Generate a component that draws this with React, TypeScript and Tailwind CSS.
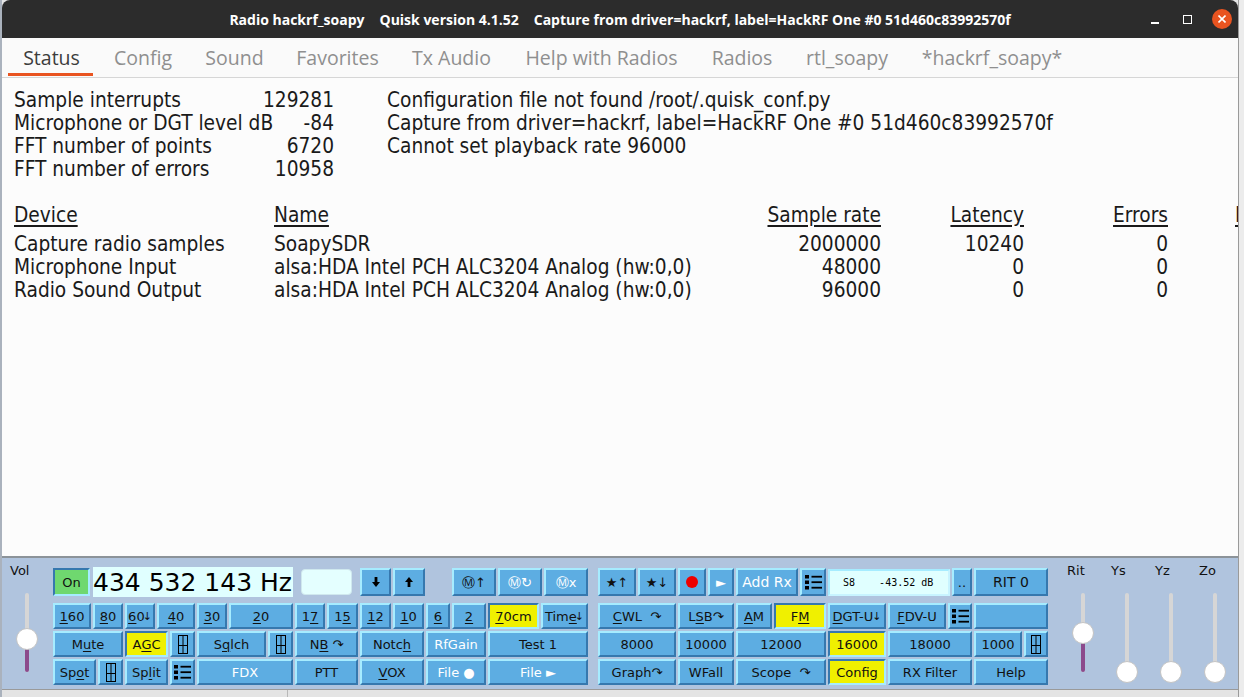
import React from 'react';

const U = ({ children }: { children: React.ReactNode }) => (
  <span className="underline decoration-1 underline-offset-[2px]">{children}</span>
);

type V = 'blue' | 'yellow' | 'green';

function Btn({
  w,
  children,
  v = 'blue',
  white = false,
  tall = false,
  extra = '',
}: {
  w: string;
  children?: React.ReactNode;
  v?: V;
  white?: boolean;
  tall?: boolean;
  extra?: string;
}) {
  const base =
    "flex items-center justify-center border-2 whitespace-nowrap overflow-hidden leading-none text-[13px] font-['DejaVu_Sans',sans-serif] shrink-0";
  const vs =
    v === 'blue'
      ? 'bg-[#5dade2] border-t-[#a6ecff] border-l-[#a6ecff] border-b-[#3678ae] border-r-[#3678ae]'
      : v === 'yellow'
      ? 'bg-[#f0f000] border-t-[#3678ae] border-l-[#3678ae] border-b-[#a6ecff] border-r-[#a6ecff]'
      : 'bg-[#6fd86f] border-t-[#3678ae] border-l-[#3678ae] border-b-[#a6ecff] border-r-[#a6ecff]';
  const h = tall ? 'h-[28px]' : 'h-[26px]';
  return (
    <div className={`${base} ${vs} ${w} ${h} ${white ? 'text-white' : 'text-[#111]'} ${extra}`}>
      {children}
    </div>
  );
}

const SliderIcon = () => (
  <svg width="10" height="19" viewBox="0 0 10 19">
    <rect x="0.5" y="0.5" width="9" height="18" fill="none" stroke="#000" strokeWidth="1" />
    <line x1="5" y1="1" x2="5" y2="18" stroke="#000" strokeWidth="1" />
    <line x1="1" y1="10.5" x2="9" y2="10.5" stroke="#000" strokeWidth="1" />
  </svg>
);

const ListIcon = () => (
  <svg width="17" height="15" viewBox="0 0 17 15">
    <rect x="0" y="0" width="4" height="3.5" fill="#000" />
    <rect x="0" y="5.5" width="4" height="3.5" fill="#000" />
    <rect x="0" y="11" width="4" height="3.5" fill="#000" />
    <rect x="6.5" y="0.8" width="10.5" height="1.8" fill="#000" />
    <rect x="6.5" y="6.3" width="10.5" height="1.8" fill="#000" />
    <rect x="6.5" y="11.8" width="10.5" height="1.8" fill="#000" />
  </svg>
);

const Arrow = ({ up = false }: { up?: boolean }) => (
  <svg width="8" height="10" viewBox="0 0 8 10" className={up ? 'rotate-180' : ''}>
    <rect x="2.6" y="0" width="2.8" height="6" fill="#000" />
    <path d="M0 5 L8 5 L4 10 Z" fill="#000" />
  </svg>
);

function VSlider({ knob, purple }: { knob: number; purple: boolean }) {
  return (
    <div className="relative h-[79px] w-[22px]">
      <div className="absolute left-[9px] top-0 h-full w-[4px] rounded-sm bg-[#d6d6d6]" />
      {purple && (
        <div
          className="absolute left-[9px] w-[4px] rounded-sm bg-[#8c4a8c]"
          style={{ top: knob, height: 79 - knob }}
        />
      )}
      <div
        className="absolute left-0 h-[22px] w-[22px] rounded-full border border-[#c4c4c4] bg-white"
        style={{ top: knob - 11 }}
      />
    </div>
  );
}

const tabs: [string, string][] = [
  ['Status', 'w-[91px]'],
  ['Config', 'w-[92px]'],
  ['Sound', 'w-[91px]'],
  ['Favorites', 'w-[115px]'],
  ['Tx Audio', 'w-[113px]'],
  ['Help with Radios', 'w-[187px]'],
  ['Radios', 'w-[94px]'],
  ['rtl_soapy', 'w-[116px]'],
  ['*hackrf_soapy*', 'w-[174px]'],
];

export default function App() {
  return (
    <div className="flex h-[697px] w-[1244px] overflow-hidden bg-[#e6e6e6]">
      <div className="w-[2px] shrink-0 bg-[#aab2bd]" />
      <div className="flex w-[1237px] shrink-0 flex-col border-r border-[#9a9a9a]">
        {/* Title bar */}
        <div className="relative flex h-[38px] shrink-0 items-center justify-center rounded-t-[8px] bg-[#2c2c2c] font-['Open_Sans',sans-serif] text-[14px] font-bold text-white">
          <div className="flex gap-[15px] pt-[1px]">
            <span>Radio hackrf_soapy</span>
            <span>Quisk version 4.1.52</span>
            <span>Capture from driver=hackrf, label=HackRF One #0 51d460c83992570f</span>
          </div>
          <div className="absolute right-[6px] top-0 flex h-[38px] items-center">
            <div className="flex h-[20px] w-[32px] items-center justify-center">
              <div className="mt-[8px] h-[1.5px] w-[8px] bg-white" />
            </div>
            <div className="flex h-[20px] w-[32px] items-center justify-center">
              <div className="h-[9px] w-[9px] border border-white" />
            </div>
            <div className="ml-[9px] flex h-[20px] w-[20px] items-center justify-center rounded-full bg-[#e95420]">
              <svg width="8" height="8" viewBox="0 0 8 8">
                <path d="M0.5 0.5 L7.5 7.5 M7.5 0.5 L0.5 7.5" stroke="#fff" strokeWidth="1.6" />
              </svg>
            </div>
          </div>
        </div>

        {/* Tabs */}
        <div className="flex h-[40px] shrink-0 border-b border-[#d6d6d6] bg-[#fafafa] pl-[4px] font-['Open_Sans',sans-serif] text-[19.5px]">
          {tabs.map(([t, w], i) => (
            <div key={t} className={`relative flex h-full items-center justify-center ${w}`}>
              <span className={i === 0 ? 'text-[#3c3c3c]' : 'text-[#8f8f8f]'}>{t}</span>
              {i === 0 && (
                <div className="absolute bottom-[1px] left-[2px] right-[4px] h-[3px] bg-[#e95420]" />
              )}
            </div>
          ))}
        </div>

        {/* Body */}
        <div className="h-[478px] shrink-0 overflow-hidden bg-[#fcfcfc] pl-[12px] pt-[11px] font-['DejaVu_Sans',sans-serif] text-[20.7px] leading-[23px] text-[#1a1a1a] [font-stretch:condensed]">
          <div className="flex">
            <div className="w-[320px]">
              <div className="flex justify-between"><span>Sample interrupts</span><span>129281</span></div>
              <div className="flex justify-between"><span>Microphone or DGT level dB</span><span>-84</span></div>
              <div className="flex justify-between"><span>FFT number of points</span><span>6720</span></div>
              <div className="flex justify-between"><span>FFT number of errors</span><span>10958</span></div>
            </div>
            <div className="ml-[53px]">
              <div>Configuration file not found /root/.quisk_conf.py</div>
              <div>Capture from driver=hackrf, label=HackRF One #0 51d460c83992570f</div>
              <div>Cannot set playback rate 96000</div>
            </div>
          </div>
          <div className="mt-[23px] grid w-[1300px] grid-cols-[260px_467px_140px_143px_144px_auto]">
            <span className="underline underline-offset-[3px]">Device</span>
            <span className="underline underline-offset-[3px]">Name</span>
            <span className="text-right underline underline-offset-[3px]">Sample rate</span>
            <span className="text-right underline underline-offset-[3px]">Latency</span>
            <span className="text-right underline underline-offset-[3px]">Errors</span>
            <span className="pl-[67px] underline underline-offset-[3px]">Level</span>
            <div className="col-span-6 h-[6px]" />
            <span>Capture radio samples</span>
            <span>SoapySDR</span>
            <span className="text-right">2000000</span>
            <span className="text-right">10240</span>
            <span className="text-right">0</span>
            <span />
            <span>Microphone Input</span>
            <span>alsa:HDA Intel PCH ALC3204 Analog (hw:0,0)</span>
            <span className="text-right">48000</span>
            <span className="text-right">0</span>
            <span className="text-right">0</span>
            <span />
            <span>Radio Sound Output</span>
            <span>alsa:HDA Intel PCH ALC3204 Analog (hw:0,0)</span>
            <span className="text-right">96000</span>
            <span className="text-right">0</span>
            <span className="text-right">0</span>
            <span />
          </div>
        </div>

        {/* Control panel */}
        <div className="flex h-[134px] shrink-0 border-b border-t-2 border-b-[#9a9a9a] border-t-[#8c9399] bg-[#b0c4de] font-['DejaVu_Sans',sans-serif] text-[13px] text-[#111]">
          {/* Vol */}
          <div className="flex w-[51px] shrink-0 flex-col items-start pl-[8px] pt-[5px]">
            <div className="h-[16px] leading-[16px]">Vol</div>
            <div className="ml-[6px] mt-[14px]">
              <VSlider knob={46} purple />
            </div>
          </div>

          {/* Buttons */}
          <div className="flex w-[995px] shrink-0 flex-col pt-[9px]">
            {/* Row 1 */}
            <div className="flex h-[30px] items-center gap-[2px]">
              <Btn w="w-[37px]" v="green" tall>On</Btn>
              <div className="ml-[1px] flex h-[30px] w-[200px] items-center bg-[#e0ffff] text-[25px] leading-none text-black">
                434 532 143 Hz
              </div>
              <div className="ml-[6px] h-[26px] w-[51px] rounded-[4px] border border-[#cfe8ee] bg-[#e4ffff]" />
              <Btn w="w-[31px]" tall extra="ml-[6px]"><Arrow /></Btn>
              <Btn w="w-[32px]" tall><Arrow up /></Btn>
              <Btn w="w-[44px]" tall extra="ml-[25px]">Ⓜ↑</Btn>
              <Btn w="w-[44px]" tall white>Ⓜ↻</Btn>
              <Btn w="w-[44px]" tall white>Ⓜx</Btn>
              <Btn w="w-[38px]" tall extra="ml-[8px]">★↑</Btn>
              <Btn w="w-[38px]" tall>★↓</Btn>
              <Btn w="w-[28px]" tall>
                <div className="h-[12px] w-[12px] rounded-full bg-[#ee0000]" />
              </Btn>
              <Btn w="w-[26px]" tall white>►</Btn>
              <Btn w="w-[62px]" tall white extra="text-[14px]">Add Rx</Btn>
              <Btn w="w-[26px]" tall><ListIcon /></Btn>
              <div className="flex h-[27px] w-[122px] shrink-0 items-center whitespace-pre border-2 border-b-[#c8f4ff] border-l-[#a6ecff] border-r-[#c8f4ff] border-t-[#a6ecff] bg-[#e0ffff] pl-[13px] font-['DejaVu_Sans_Mono',monospace] text-[10px] text-black">
                {'S8    -43.52 dB'}
              </div>
              <Btn w="w-[20px]" tall>..</Btn>
              <Btn w="w-[74px]" tall extra="text-[14px]">RIT 0</Btn>
            </div>

            {/* Row 2 */}
            <div className="mt-[6px] flex h-[26px] gap-[2px]">
              <Btn w="w-[38px]"><U>1</U>60</Btn>
              <Btn w="w-[30px]"><U>8</U>0</Btn>
              <Btn w="w-[30px]"><U>6</U>0<span className="-ml-[2px] text-[11px]">↓</span></Btn>
              <Btn w="w-[38px]"><U>4</U>0</Btn>
              <Btn w="w-[30px]"><U>3</U>0</Btn>
              <Btn w="w-[64px]"><U>2</U>0</Btn>
              <Btn w="w-[30px]">1<U>7</U></Btn>
              <Btn w="w-[31px]">1<U>5</U></Btn>
              <Btn w="w-[31px]"><U>1</U>2</Btn>
              <Btn w="w-[31px]"><U>1</U>0</Btn>
              <Btn w="w-[24px]"><U>6</U></Btn>
              <Btn w="w-[34px]"><U>2</U></Btn>
              <Btn w="w-[51px]" v="yellow"><U>7</U>0cm</Btn>
              <Btn w="w-[47px]">Tim<U>e</U><span className="-ml-[2px] text-[11px]">↓</span></Btn>
              <Btn w="w-[78px]" extra="ml-[8px]"><U>C</U>WL&nbsp;&nbsp;↷</Btn>
              <Btn w="w-[56px]">L<U>S</U>B↷</Btn>
              <Btn w="w-[36px]"><U>A</U>M</Btn>
              <Btn w="w-[52px]" v="yellow">F<U>M</U></Btn>
              <Btn w="w-[58px]"><U>D</U>GT-U<span className="-ml-[1px] text-[11px]">↓</span></Btn>
              <Btn w="w-[58px]"><U>F</U>DV-U</Btn>
              <Btn w="w-[24px]"><ListIcon /></Btn>
              <Btn w="w-[74px]" />
            </div>

            {/* Row 3 */}
            <div className="mt-[2px] flex h-[26px] gap-[2px]">
              <Btn w="w-[70px]">M<U>u</U>te</Btn>
              <Btn w="w-[43px]" v="yellow">A<U>G</U>C</Btn>
              <Btn w="w-[25px]"><SliderIcon /></Btn>
              <Btn w="w-[69px]">S<U>q</U>lch</Btn>
              <Btn w="w-[25px]"><SliderIcon /></Btn>
              <Btn w="w-[63px]">N<U>B</U>&nbsp;↷</Btn>
              <Btn w="w-[64px]">Notc<U>h</U></Btn>
              <Btn w="w-[60px]" white>RfGain</Btn>
              <Btn w="w-[100px]">Test 1</Btn>
              <Btn w="w-[78px]" extra="ml-[8px]">8000</Btn>
              <Btn w="w-[56px]">10000</Btn>
              <Btn w="w-[90px]">12000</Btn>
              <Btn w="w-[58px]" v="yellow">16000</Btn>
              <Btn w="w-[84px]">18000</Btn>
              <Btn w="w-[48px]">1000</Btn>
              <Btn w="w-[24px]"><SliderIcon /></Btn>
            </div>

            {/* Row 4 */}
            <div className="mt-[2px] flex h-[26px] gap-[2px]">
              <Btn w="w-[43px]">Sp<U>o</U>t</Btn>
              <Btn w="w-[25px]"><SliderIcon /></Btn>
              <Btn w="w-[43px]">Sp<U>l</U>it</Btn>
              <Btn w="w-[25px]"><ListIcon /></Btn>
              <Btn w="w-[96px]" white>FDX</Btn>
              <Btn w="w-[63px]">PTT</Btn>
              <Btn w="w-[64px]"><U>V</U>OX</Btn>
              <Btn w="w-[60px]" white>File&nbsp;●</Btn>
              <Btn w="w-[100px]" white>File&nbsp;►</Btn>
              <Btn w="w-[78px]" extra="ml-[8px]">Graph↷</Btn>
              <Btn w="w-[56px]">WFall</Btn>
              <Btn w="w-[90px]">Scope&nbsp;&nbsp;↷</Btn>
              <Btn w="w-[58px]" v="yellow">Config</Btn>
              <Btn w="w-[84px]">RX Filter</Btn>
              <Btn w="w-[74px]">Help</Btn>
            </div>
          </div>

          {/* Right sliders */}
          <div className="ml-[13px] flex">
            {[
              ['Rit', 40, true],
              ['Ys', 79, false],
              ['Yz', 79, false],
              ['Zo', 79, false],
            ].map(([l, k, p]) => (
              <div key={l as string} className="flex w-[44px] flex-col items-start pt-[5px]">
                <div className="h-[16px] pl-[6px] leading-[16px]">{l as string}</div>
                <div className="ml-[11px] mt-[14px]">
                  <VSlider knob={k as number} purple={p as boolean} />
                </div>
              </div>
            ))}
          </div>
        </div>

        {/* Bottom strip */}
        <div className="flex h-[7px] shrink-0 bg-[#e4e4e4]">
          <div className="w-[286px] border-r border-[#b8b8b8]" />
        </div>
      </div>
      <div className="w-[5px] shrink-0 bg-[#ececec]" />
    </div>
  );
}
